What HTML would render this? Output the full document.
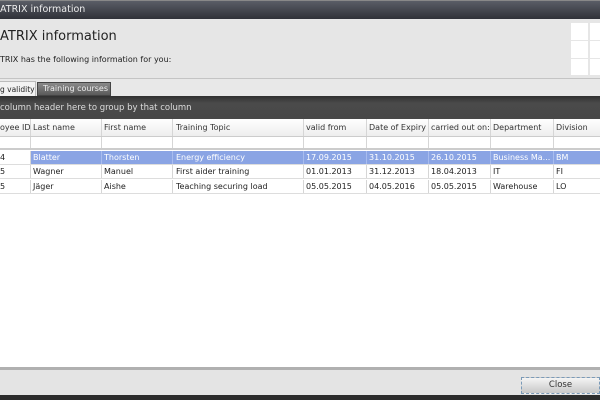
<!DOCTYPE html>
<html><head><style>
*{margin:0;padding:0;box-sizing:border-box}
body{width:600px;height:400px;overflow:hidden;position:relative;background:#fff;font-family:"DejaVu Sans","Liberation Sans",sans-serif;font-size:8px;color:#222}
.abs{position:absolute;white-space:nowrap}
#title{left:0;top:0;width:600px;height:19px;background:linear-gradient(#5a5d66,#2f3138);border-top:1px solid #888;color:#eee;font-size:9.5px;line-height:18px;padding-left:0}
#head{left:0;top:19px;width:600px;height:60px;background:#e6e6e6;border-bottom:1px solid #c4c4c4}
#tabs{left:0;top:79px;width:600px;height:18px;background:#e8e8e8}
#group{left:0;top:96px;width:600px;height:23px;background:linear-gradient(#2f2f2f,#4a4a4a 30%,#484848);color:#ddd;font-size:8.5px;line-height:25px}
.row{position:absolute;left:0;width:600px;height:14px;line-height:14px;border-bottom:1px solid #ddd}
.c{position:absolute;top:0;height:100%;border-right:1px solid #d6d6d6;padding-left:3px;white-space:nowrap;overflow:hidden}
#hdr{top:119px;height:18px;line-height:18px;background:linear-gradient(#fff,#eee);border-bottom:1px solid #ccc;color:#333}
#filt{top:137px;height:13px;border-bottom:2px solid #ccc}
.sel{background:#8aa4e4;color:#fff}
#bot{left:0;top:367px;width:600px;height:29px;background:#e4e4e4;border-top:3px solid #b0b0b0}
#bb{left:0;top:395px;width:600px;height:5px;background:#2c2c2c}
</style></head><body>
<div id="title" class="abs">ATRIX information</div>
<div id="head" class="abs">
 <div class="abs" style="left:0;top:10px;font-size:13px;color:#222">ATRIX information</div>
 <div class="abs" style="left:0;top:36px;font-size:8px;color:#222">TRIX has the following information for you:</div>
 <div class="abs" style="left:571px;top:4px;width:17px;height:17px;background:#fff"></div>
 <div class="abs" style="left:590px;top:4px;width:10px;height:17px;background:#fff"></div>
 <div class="abs" style="left:571px;top:22px;width:17px;height:17px;background:#fff"></div>
 <div class="abs" style="left:590px;top:22px;width:10px;height:17px;background:#fff"></div>
 <div class="abs" style="left:571px;top:40px;width:17px;height:16px;background:#fff"></div>
 <div class="abs" style="left:590px;top:40px;width:10px;height:16px;background:#fff"></div>
</div>
<div id="tabs" class="abs">
 <div class="abs" style="left:0;top:2px;width:36px;height:17px;background:#f2f2f2;border:1px solid #bbb;border-left:none;border-bottom:none;line-height:15px;font-size:7.5px;overflow:hidden">g validity</div>
 <div class="abs" style="left:37px;top:3px;width:74px;height:14px;background:linear-gradient(#8a8a8a,#5a5a5a);border:1px solid #444;color:#eee;line-height:12px;font-size:8px;padding-left:5px">Training courses</div>
</div>
<div id="group" class="abs">column header here to group by that column</div>
<div id="hdr" class="row">
 <div class="c" style="left:0;width:31px;padding-left:0">oyee ID</div><div class="c" style="left:30px;width:72px">Last name</div><div class="c" style="left:101px;width:72px">First name</div><div class="c" style="left:173px;width:131px">Training Topic</div><div class="c" style="left:303px;width:64px">valid from</div><div class="c" style="left:366px;width:63px">Date of Expiry</div><div class="c" style="left:428px;width:63px">carried out on:</div><div class="c" style="left:490px;width:64px">Department</div><div class="c" style="left:553px;width:47px;border:none">Division</div>
</div>
<div id="filt" class="row">
 <div class="c" style="left:0;width:31px"></div><div class="c" style="left:30px;width:72px"></div><div class="c" style="left:101px;width:72px"></div><div class="c" style="left:173px;width:131px"></div><div class="c" style="left:303px;width:64px"></div><div class="c" style="left:366px;width:63px"></div><div class="c" style="left:428px;width:63px"></div><div class="c" style="left:490px;width:64px"></div>
</div>
<div class="row sel" style="top:151px">
 <div class="c" style="left:0;width:31px;padding-left:0;background:#fff;color:#222">4</div><div class="c" style="left:30px;width:72px;border-color:#a8bcee">Blatter</div><div class="c" style="left:101px;width:72px;border-color:#a8bcee">Thorsten</div><div class="c" style="left:173px;width:131px;border-color:#a8bcee">Energy efficiency</div><div class="c" style="left:303px;width:64px;border-color:#a8bcee">17.09.2015</div><div class="c" style="left:366px;width:63px;border-color:#a8bcee">31.10.2015</div><div class="c" style="left:428px;width:63px;border-color:#a8bcee">26.10.2015</div><div class="c" style="left:490px;width:64px;border-color:#a8bcee">Business Ma...</div><div class="c" style="left:553px;width:47px;border:none">BM</div>
</div>
<div class="row" style="top:165px">
 <div class="c" style="left:0;width:31px;padding-left:0">5</div><div class="c" style="left:30px;width:72px">Wagner</div><div class="c" style="left:101px;width:72px">Manuel</div><div class="c" style="left:173px;width:131px">First aider training</div><div class="c" style="left:303px;width:64px">01.01.2013</div><div class="c" style="left:366px;width:63px">31.12.2013</div><div class="c" style="left:428px;width:63px">18.04.2013</div><div class="c" style="left:490px;width:64px">IT</div><div class="c" style="left:553px;width:47px;border:none">FI</div>
</div>
<div class="row" style="top:180px">
 <div class="c" style="left:0;width:31px;padding-left:0">5</div><div class="c" style="left:30px;width:72px">Jäger</div><div class="c" style="left:101px;width:72px">Aishe</div><div class="c" style="left:173px;width:131px">Teaching securing load</div><div class="c" style="left:303px;width:64px">05.05.2015</div><div class="c" style="left:366px;width:63px">04.05.2016</div><div class="c" style="left:428px;width:63px">05.05.2015</div><div class="c" style="left:490px;width:64px">Warehouse</div><div class="c" style="left:553px;width:47px;border:none">LO</div>
</div>
<div id="bot" class="abs">
 <div class="abs" style="left:521px;top:7px;width:79px;height:17px;background:linear-gradient(#f4f4f4,#c8c8c8);border:1px dashed #7a9ab8;text-align:center;line-height:15px;font-size:8.5px;color:#333">Close</div>
</div>
<div id="bb" class="abs"></div>
</body></html>
